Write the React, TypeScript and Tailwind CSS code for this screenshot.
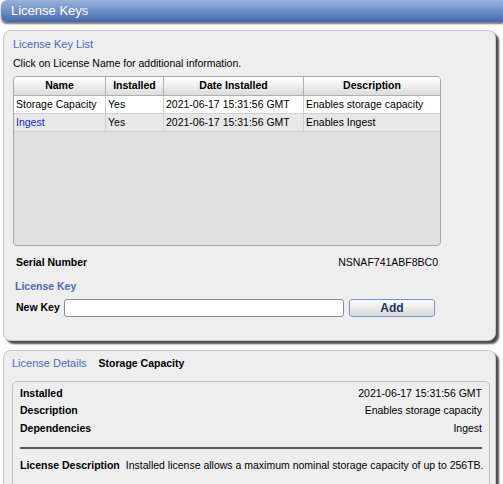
import React from "react";

const F = { fontFamily: '"Liberation Sans", Arial, sans-serif' };

export default function App() {
  return (
    <div className="w-[503px] h-[484px] overflow-hidden bg-white text-[10.5px] text-black" style={F}>
      {/* header bar */}
      <div className="ml-[1px] h-[22px] rounded-l-[6px] bg-gradient-to-b from-[#9bb3dc] via-[#6f8fc8] to-[#4469ae] shadow-[0_2px_2px_rgba(0,0,0,0.55)] flex items-center pl-[10px] text-white text-[13px]">
        License Keys
      </div>

      {/* Panel 1 */}
      <div className="mt-[8px] ml-[3px] w-[493px] h-[311px] rounded-[8px] border border-[#c8c8c8] bg-[#eeeeee] shadow-[3px_3px_2px_rgba(0,0,0,0.7)] px-[9px] pt-[6px] flex flex-col">
        <div className="text-[#5566b0] text-[11px] leading-[14px]">License Key List</div>
        <div className="mt-[5px] leading-[14px]">Click on License Name for additional information.</div>
        <div className="mt-[6px] w-[428px] h-[170px] rounded-[4px] border border-[#a8a8a8] bg-[#e0e0e0] overflow-hidden">
          <div className="flex h-[19px] bg-gradient-to-b from-white to-[#dcdcdc] border-b border-[#b0b0b0] font-bold">
            <div className="w-[92px] border-r border-[#b0b0b0] flex items-center justify-center">Name</div>
            <div className="w-[58px] border-r border-[#b0b0b0] flex items-center justify-center">Installed</div>
            <div className="w-[140px] border-r border-[#b0b0b0] flex items-center justify-center">Date Installed</div>
            <div className="flex-1 flex items-center justify-center">Description</div>
          </div>
          <div className="flex h-[18px] bg-white border-b border-[#d0d0d0] items-center">
            <div className="w-[92px] pl-[2px] border-r border-[#d0d0d0] h-full flex items-center">Storage Capacity</div>
            <div className="w-[58px] pl-[2px] border-r border-[#d0d0d0] h-full flex items-center">Yes</div>
            <div className="w-[140px] pl-[2px] border-r border-[#d0d0d0] h-full flex items-center">2021-06-17 15:31:56 GMT</div>
            <div className="flex-1 pl-[2px] h-full flex items-center">Enables storage capacity</div>
          </div>
          <div className="flex h-[18px] bg-[#e8e8e8] border-b border-[#d0d0d0] items-center">
            <div className="w-[92px] pl-[2px] border-r border-[#d0d0d0] h-full flex items-center text-[#2222dd]">Ingest</div>
            <div className="w-[58px] pl-[2px] border-r border-[#d0d0d0] h-full flex items-center">Yes</div>
            <div className="w-[140px] pl-[2px] border-r border-[#d0d0d0] h-full flex items-center">2021-06-17 15:31:56 GMT</div>
            <div className="flex-1 pl-[2px] h-full flex items-center">Enables Ingest</div>
          </div>
        </div>
        <div className="mt-[9px] w-[428px] flex justify-between px-[3px] leading-[14px]">
          <span className="font-bold">Serial Number</span>
          <span>NSNAF741ABF8BC0</span>
        </div>
        <div className="mt-[10px] pl-[2px] text-[#5566b0] font-bold leading-[14px]">License Key</div>
        <div className="mt-[6px] flex items-center pl-[3px]">
          <span className="font-bold w-[48px]">New Key</span>
          <div className="w-[280px] h-[18px] rounded-[3px] border border-[#8a8a8a] bg-white"></div>
          <div className="ml-[5px] w-[86px] h-[18px] rounded-[3px] border border-[#7e97c0] bg-gradient-to-b from-white to-[#d8d8d8] flex items-center justify-center font-bold text-[12px] text-[#223366]">Add</div>
        </div>
      </div>

      {/* Panel 2 */}
      <div className="mt-[9px] ml-[3px] w-[493px] h-[160px] rounded-[8px] border border-[#c8c8c8] bg-[#eeeeee] shadow-[3px_3px_2px_rgba(0,0,0,0.7)] px-[8px] pt-[5px]">
        <div className="flex leading-[14px]">
          <span className="text-[#5566b0] text-[11px]">License Details</span>
          <span className="ml-[12px] font-bold">Storage Capacity</span>
        </div>
        <div className="mt-[11px] w-[478px] h-[120px] rounded-[5px] border border-[#c0c0c0] px-[7px] pt-[3px]">
          <div className="flex justify-between h-[17.5px] items-center"><span className="font-bold">Installed</span><span>2021-06-17 15:31:56 GMT</span></div>
          <div className="flex justify-between h-[17.5px] items-center"><span className="font-bold">Description</span><span>Enables storage capacity</span></div>
          <div className="flex justify-between h-[17.5px] items-center"><span className="font-bold">Dependencies</span><span>Ingest</span></div>
          <div className="mt-[9px] border-t-2 border-[#555]"></div>
          <div className="mt-[9px] flex items-center leading-[14px] whitespace-nowrap">
            <span className="font-bold">License Description</span>
            <span className="ml-[6px]">Installed license allows a maximum nominal storage capacity of up to 256TB.</span>
          </div>
        </div>
      </div>
    </div>
  );
}
